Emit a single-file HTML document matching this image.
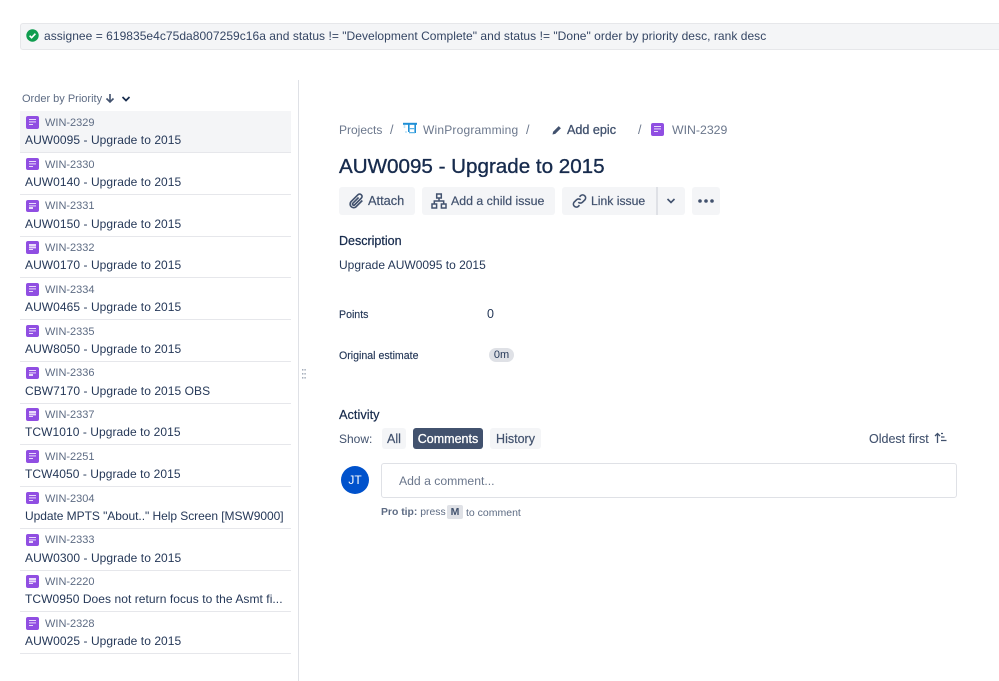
<!DOCTYPE html>
<html><head><meta charset="utf-8">
<style>
html,body{margin:0;padding:0;background:#fff}
body{width:999px;height:681px;position:relative;overflow:hidden;font-family:"Liberation Sans",sans-serif;font-size:12px;color:#172b4d}
.t{position:absolute;white-space:nowrap;line-height:16px}
.b{position:absolute}
.row{position:absolute;left:20px;width:271px;height:41px}
.row:after{content:"";position:absolute;left:0;right:0;top:41px;height:1px;background:#e6e7eb}
.row .i{position:absolute;left:6px;top:5px;width:12.5px;height:12.5px;background:#904ee2;border-radius:2px}
.i:before{content:"";position:absolute;left:2.5px;top:3px;width:7.5px;height:1.4px;background:#e9dcfa;box-shadow:0 2.4px 0 #e9dcfa}
.i:after{content:"";position:absolute;left:2.5px;top:7.8px;width:4.5px;height:1.4px;background:#e9dcfa}
.row .k{position:absolute;left:25px;top:3.8px;color:#5e6c84;font-size:11px;line-height:16px;white-space:nowrap;letter-spacing:0}
.row .s{position:absolute;left:5px;top:21.2px;font-size:12px;letter-spacing:.06px;line-height:16px;white-space:nowrap;color:#253858}
.btn{position:absolute;top:187px;height:28px;background:#f4f5f7;border-radius:3px}
.btn span{position:absolute;top:6px;line-height:16px;font-size:12.3px;color:#42526e;white-space:nowrap;font-weight:400;-webkit-text-stroke:.2px #42526e}
.tab{position:absolute;top:428px;height:21px;background:#f4f5f7;border-radius:3px;text-align:center;line-height:22px;font-size:12.5px;color:#42526e;-webkit-text-stroke:.2px #42526e}
</style></head><body>

<div class="b" style="left:20px;top:23px;width:985px;height:27px;background:#f4f5f7;border:1px solid #e6e7ea;border-radius:3px;box-sizing:border-box"></div>
<svg class="b" style="left:26px;top:29px" width="13" height="13" viewBox="0 0 13 13"><circle cx="6.5" cy="6.5" r="6.2" fill="#0f9d4f"/><path d="M3.6 6.7l2 2 3.8-4" fill="none" stroke="#fff" stroke-width="1.6"/></svg>
<div class="t" style="left:44px;top:28px;color:#344563;font-size:12px;letter-spacing:.04px">assignee = 619835e4c75da8007259c16a and status != "Development Complete" and status != "Done" order by priority desc, rank desc</div>

<div class="b" style="left:298px;top:80px;width:1px;height:601px;background:#dfe1e6"></div>
<svg class="b" style="left:302px;top:369px" width="4" height="13" viewBox="0 0 4 13"><g fill="#a5adba"><rect x="0" y="0" width="1.4" height="1.6"/><rect x="2.4" y="0" width="1.4" height="1.6"/><rect x="0" y="4" width="1.4" height="1.6"/><rect x="2.4" y="4" width="1.4" height="1.6"/><rect x="0" y="8" width="1.4" height="1.6"/><rect x="2.4" y="8" width="1.4" height="1.6"/></g></svg>

<div class="t" style="left:22px;top:91px;color:#5e6c84;font-size:11px;">Order by Priority</div>
<svg class="b" style="left:105px;top:93px" width="10" height="11" viewBox="0 0 10 11"><path d="M5 1v8M1.5 5.5L5 9l3.5-3.5" fill="none" stroke="#42526e" stroke-width="1.6"/></svg>
<svg class="b" style="left:121px;top:95px" width="10" height="8" viewBox="0 0 10 8"><path d="M1.5 2L5 5.5 8.5 2" fill="none" stroke="#172b4d" stroke-width="1.7"/></svg>

<div class="row" style="top:111px;background:#f4f5f7"><div class="i"></div><div class="k">WIN-2329</div><div class="s">AUW0095 - Upgrade to 2015</div></div>
<div class="row" style="top:152.75px"><div class="i"></div><div class="k">WIN-2330</div><div class="s">AUW0140 - Upgrade to 2015</div></div>
<div class="row" style="top:194.5px"><div class="i"></div><div class="k">WIN-2331</div><div class="s">AUW0150 - Upgrade to 2015</div></div>
<div class="row" style="top:236.25px"><div class="i"></div><div class="k">WIN-2332</div><div class="s">AUW0170 - Upgrade to 2015</div></div>
<div class="row" style="top:278px"><div class="i"></div><div class="k">WIN-2334</div><div class="s">AUW0465 - Upgrade to 2015</div></div>
<div class="row" style="top:319.75px"><div class="i"></div><div class="k">WIN-2335</div><div class="s">AUW8050 - Upgrade to 2015</div></div>
<div class="row" style="top:361.5px"><div class="i"></div><div class="k">WIN-2336</div><div class="s">CBW7170 - Upgrade to 2015 OBS</div></div>
<div class="row" style="top:403.25px"><div class="i"></div><div class="k">WIN-2337</div><div class="s">TCW1010 - Upgrade to 2015</div></div>
<div class="row" style="top:445px"><div class="i"></div><div class="k">WIN-2251</div><div class="s">TCW4050 - Upgrade to 2015</div></div>
<div class="row" style="top:486.75px"><div class="i"></div><div class="k">WIN-2304</div><div class="s" style="letter-spacing:-.05px">Update MPTS "About.." Help Screen [MSW9000]</div></div>
<div class="row" style="top:528.5px"><div class="i"></div><div class="k">WIN-2333</div><div class="s">AUW0300 - Upgrade to 2015</div></div>
<div class="row" style="top:570.25px"><div class="i"></div><div class="k">WIN-2220</div><div class="s">TCW0950 Does not return focus to the Asmt fi...</div></div>
<div class="row" style="top:612px"><div class="i"></div><div class="k">WIN-2328</div><div class="s">AUW0025 - Upgrade to 2015</div></div>

<div class="t" style="left:339px;top:122px;color:#6b778c;font-size:12px">Projects</div>
<div class="t" style="left:390px;top:122px;color:#6b778c;font-size:12.5px">/</div>
<svg class="b" style="left:403px;top:122px" width="14" height="13" viewBox="0 0 14 13"><path d="M0 .8h14v2H0z" fill="#1f8fd6"/><path d="M5 2.5h1.6v7.5H5zM11.4 2.5H13V11h-1.6z" fill="#1f8fd6"/><path d="M6 6.6h6M6 10.6h6" stroke="#5db4e6" stroke-width="1.2"/><path d="M1.5 3v3M3 9v2" stroke="#bfe3f6" stroke-width="1.6"/></svg>
<div class="t" style="left:423px;top:122px;color:#6b778c;font-size:12px;letter-spacing:.19px">WinProgramming</div>
<div class="t" style="left:526px;top:122px;color:#6b778c;font-size:12.5px">/</div>
<svg class="b" style="left:551px;top:124px" width="12" height="12" viewBox="0 0 12 12"><path d="M1.5 10.5l.6-2.8 5.6-5.6 2.2 2.2-5.6 5.6z" fill="#42526e"/></svg>
<div class="t" style="left:567px;top:122px;color:#42526e;font-size:12.6px;-webkit-text-stroke:.3px #42526e">Add epic</div>
<div class="t" style="left:638px;top:122px;color:#6b778c;font-size:12.5px">/</div>
<div class="b i" style="left:651px;top:123px;width:13px;height:13px;background:#904ee2;border-radius:2px"></div>
<div class="t" style="left:672px;top:122px;color:#6b778c;font-size:12.3px">WIN-2329</div>

<div class="t" style="left:339px;top:154px;font-size:20.6px;line-height:26px;color:#172b4d;-webkit-text-stroke:.35px #172b4d">AUW0095 - Upgrade to 2015</div>

<div class="btn" style="left:339px;width:76px"><span style="left:29px;font-size:12.8px">Attach</span>
<svg class="b" style="left:8px;top:5px" width="18" height="18" viewBox="0 0 18 18"><path d="M15.3 8.5l-6.4 6.4a3.6 3.6 0 01-5-5.1l7-7a2.4 2.4 0 013.4 3.4l-6.7 6.7a1.2 1.2 0 01-1.7-1.7l5.7-5.7" fill="none" stroke="#42526e" stroke-width="1.7"/></svg></div>
<div class="btn" style="left:422px;width:133px"><span style="left:29px;font-size:12.35px">Add a child issue</span>
<svg class="b" style="left:9px;top:6px" width="16" height="16" viewBox="0 0 16 16"><g fill="none" stroke="#42526e" stroke-width="1.5"><rect x="5.7" y="1" width="4.6" height="4"/><rect x="1" y="11" width="4.6" height="4"/><rect x="10.4" y="11" width="4.6" height="4"/><path d="M8 5v3M3.3 11V8h9.4v3"/></g></svg></div>
<div class="btn" style="left:562px;width:123px"><span style="left:29px;font-size:12.2px">Link issue</span>
<svg class="b" style="left:9px;top:6px" width="17" height="16" viewBox="0 0 16 16"><g fill="none" stroke="#42526e" stroke-width="1.6"><path d="M6.8 9.2a3 3 0 004.2 0l2.5-2.5a3 3 0 00-4.2-4.2L8 3.8"/><path d="M9.2 6.8a3 3 0 00-4.2 0L2.5 9.3a3 3 0 004.2 4.2L8 12.2"/></g></svg>
<div class="b" style="left:94px;top:0;width:2px;height:28px;background:#dfe1e6"></div>
<svg class="b" style="left:104px;top:10px" width="10" height="8" viewBox="0 0 10 8"><path d="M1.5 2L5 5.5 8.5 2" fill="none" stroke="#42526e" stroke-width="1.6"/></svg></div>
<div class="btn" style="left:692px;width:28px"><svg class="b" style="left:6px;top:12px" width="16" height="4" viewBox="0 0 16 4"><circle cx="2" cy="2" r="1.8" fill="#42526e"/><circle cx="8" cy="2" r="1.8" fill="#42526e"/><circle cx="14" cy="2" r="1.8" fill="#42526e"/></svg></div>

<div class="t" style="left:339px;top:232.5px;font-size:12.5px;color:#172b4d;-webkit-text-stroke:.25px #172b4d">Description</div>
<div class="t" style="left:339px;top:257px;font-size:12px;color:#253858">Upgrade AUW0095 to 2015</div>

<div class="t" style="left:339px;top:306.5px;font-size:10.6px;color:#253858;-webkit-text-stroke:.15px #253858">Points</div>
<div class="t" style="left:487px;top:305.5px;font-size:12.5px;color:#253858">0</div>
<div class="t" style="left:339px;top:348px;font-size:10.6px;color:#253858;-webkit-text-stroke:.15px #253858">Original estimate</div>
<div class="b" style="left:489px;top:348px;width:25px;height:14px;border-radius:7px;background:#dfe1e6;text-align:center;line-height:14px;font-size:11px;color:#253858">0m</div>

<div class="t" style="left:339px;top:406.5px;font-size:12.8px;color:#172b4d;-webkit-text-stroke:.2px #172b4d">Activity</div>
<div class="t" style="left:339px;top:431px;font-size:12px;color:#42526e">Show:</div>
<div class="tab" style="left:382px;width:24px">All</div>
<div class="tab" style="left:413px;width:70px;background:#42526e;color:#fff;-webkit-text-stroke:.3px #fff">Comments</div>
<div class="tab" style="left:490px;width:51px">History</div>

<div class="t" style="left:869px;top:431px;font-size:12.5px;color:#42526e;-webkit-text-stroke:.1px #42526e">Oldest first</div>
<svg class="b" style="left:934px;top:432px" width="13" height="12" viewBox="0 0 13 12"><path d="M3.5 11V1.5M1 4l2.5-2.5L6 4" fill="none" stroke="#42526e" stroke-width="1.3"/><path d="M7 1.5h2M7 5h3.5M7 8.5h5.5" fill="none" stroke="#42526e" stroke-width="1.3"/></svg>

<div class="b" style="left:341px;top:466px;width:28px;height:28px;border-radius:50%;background:#0052cc;color:#fff;text-align:center;line-height:28px;font-size:12px">JT</div>
<div class="b" style="left:381px;top:463px;width:576px;height:35px;border:1px solid #dfe1e6;border-radius:3px;box-sizing:border-box"></div>
<div class="t" style="left:399px;top:473px;font-size:12.2px;color:#6b778c">Add a comment...</div>
<div class="t" style="left:381px;top:504.5px;font-size:10.4px;color:#5e6c84"><b>Pro tip:</b> press</div>
<div class="b" style="left:447px;top:505px;width:16px;height:14px;border-radius:2px;background:#dfe1e6;text-align:center;line-height:14px;font-size:10.5px;font-weight:bold;color:#42526e">M</div>
<div class="t" style="left:466px;top:504.5px;font-size:10.5px;color:#5e6c84">to comment</div>
</body></html>
